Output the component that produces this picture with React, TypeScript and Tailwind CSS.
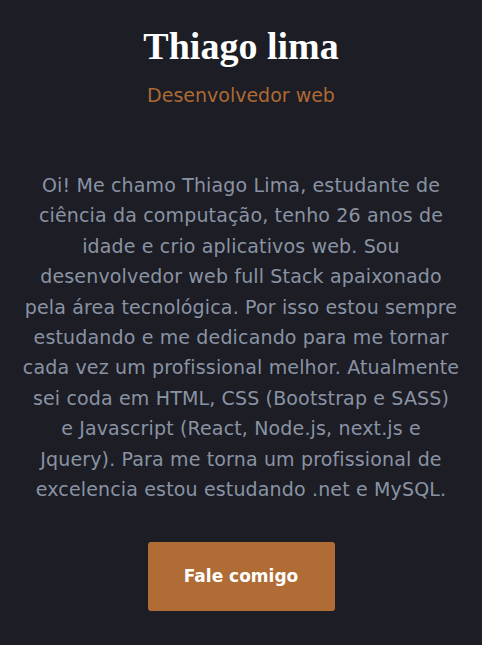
const lines = [
  "Oi! Me chamo Thiago Lima, estudante de",
  "ciência da computação, tenho 26 anos de",
  "idade e crio aplicativos web. Sou",
  "desenvolvedor web full Stack apaixonado",
  "pela área tecnológica. Por isso estou sempre",
  "estudando e me dedicando para me tornar",
  "cada vez um profissional melhor. Atualmente",
  "sei coda em HTML, CSS (Bootstrap e SASS)",
  "e Javascript (React, Node.js, next.js e",
  "Jquery). Para me torna um profissional de",
  "excelencia estou estudando .net e MySQL.",
]

export default function App() {
  return (
    <main className="flex min-h-[645px] w-full flex-col items-center bg-[#1c1d25] px-2 pt-[24px] text-center font-['DejaVu_Sans',sans-serif]">
      <h1 className="font-['Liberation_Serif',serif] text-[38px] leading-[44px] font-bold text-white">
        Thiago lima
      </h1>
      <h2 className="mt-[14px] text-[19px] leading-[26px] text-[#ad6a34]">
        Desenvolvedor web
      </h2>
      <p className="mt-[62px] text-[19px] leading-[30.4px] tracking-[0.15px] whitespace-nowrap text-[#8a93a3]">
        {lines.map(line => (
          <span key={line} className="block">
            {line}
          </span>
        ))}
      </p>
      <button className="mt-[38px] h-[69px] w-[187px] rounded-[3px] bg-[#b06c35] text-[17px] font-semibold text-white">
        Fale comigo
      </button>
    </main>
  )
}
